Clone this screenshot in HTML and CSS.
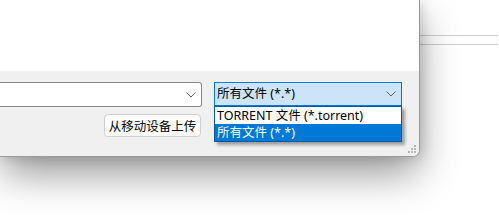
FILE: index.html
```html
<!DOCTYPE html>
<html lang="zh-CN">
<head>
<meta charset="utf-8">
<link rel="stylesheet" href="styles.css">
</head>
<body>
<div class="desktop">
  <div class="window">
    <div class="file-list"></div>
    <div class="footer">
      <div class="row row-top">
        <div class="name-box">
          <svg class="chev" width="10" height="6" viewBox="0 0 10 6"><path d="M0.5 0.5 L5 5 L9.5 0.5" fill="none" stroke="#606060" stroke-width="1"/></svg>
        </div>
        <div class="type-wrap">
          <div class="type-box">
            <span>所有文件 (*.*)</span>
            <svg class="chev" width="10" height="6" viewBox="0 0 10 6"><path d="M0.5 0.5 L5 5 L9.5 0.5" fill="none" stroke="#606060" stroke-width="1"/></svg>
          </div>
          <ul class="type-list">
            <li>TORRENT 文件 (*.torrent)</li>
            <li class="sel">所有文件 (*.*)</li>
          </ul>
        </div>
      </div>
      <div class="row row-bottom">
        <button class="btn">从移动设备上传</button>
      </div>
      <div class="grip">
        <svg width="9" height="9" viewBox="0 0 9 9" fill="#b8b8b8">
          <rect x="6" y="0" width="2" height="2"/>
          <rect x="3" y="3" width="2" height="2"/><rect x="6" y="3" width="2" height="2"/>
          <rect x="0" y="6" width="2" height="2"/><rect x="3" y="6" width="2" height="2"/><rect x="6" y="6" width="2" height="2"/>
        </svg>
      </div>
    </div>
  </div>
  <div class="behind">
    <div class="line l1"></div>
    <div class="line l2"></div>
  </div>
</div>
</body>
</html>
```
FILE: styles.css
```css
html, body {
  margin: 0;
  padding: 0;
  width: 499px;
  height: 215px;
  overflow: hidden;
  background: #ffffff;
  font-family: "Noto Sans", "Noto Sans CJK SC", sans-serif;
  font-size: 12.5px;
}
.desktop {
  display: flex;
  width: 499px;
  height: 215px;
  background: #ffffff;
}
.window {
  position: relative;
  z-index: 2;
  width: 419px;
  height: 156px;
  flex: none;
  border-right: 1px solid #9a9a9a;
  border-bottom: 1px solid #9a9a9a;
  border-bottom-right-radius: 7px;
  box-shadow: 0 18px 40px -2px rgba(0,0,0,0.42), 3px 2px 12px rgba(0,0,0,0.12);
  display: flex;
  flex-direction: column;
}
.file-list {
  height: 71px;
  background: #ffffff;
  flex: none;
}
.footer {
  flex: 1;
  background: #f0f0f0;
  border-bottom-right-radius: 7px;
  position: relative;
  padding-top: 11px;
  display: flex;
  flex-direction: column;
}
.row {
  display: flex;
}
.name-box {
  width: 198px;
  height: 23px;
  margin-left: -2px;
  border: 1px solid #8a8a8a;
  border-left: none;
  border-radius: 0 3px 3px 0;
  background: #ffffff;
  display: flex;
  align-items: center;
  justify-content: flex-end;
  padding-right: 5px;
  box-sizing: content-box;
}
.type-wrap {
  position: relative;
  margin-left: 12px;
}
.type-box {
  width: 179px;
  height: 22px;
  border: 1px solid #0078d7;
  background: #cce4f7;
  display: flex;
  align-items: center;
  justify-content: space-between;
  padding: 0 5px 0 2px;
  box-sizing: content-box;
  color: #000;
  line-height: 22px;
}
.type-box span { white-space: nowrap; }
.type-list {
  position: absolute;
  left: 0;
  top: 24px;
  width: 186px;
  margin: 0;
  padding: 0;
  list-style: none;
  border: 1px solid #0a5aa0;
  background: #fff;
  box-shadow: 3px 3px 3px rgba(0,0,0,0.35);
  z-index: 5;
}
.type-list li {
  height: 17px;
  line-height: 17px;
  padding-left: 2px;
  color: #000;
  white-space: nowrap;
}
.type-list li.sel {
  background: #0078d7;
  color: #fff;
}
.row-bottom {
  margin-top: 7px;
  padding-left: 104px;
}
.btn {
  width: 97px;
  height: 23px;
  padding: 0;
  border: 1px solid #d0d0d0;
  border-radius: 4px;
  background: #fdfdfd;
  font-family: "Noto Sans CJK SC", sans-serif;
  font-size: 12.5px;
  color: #000;
  line-height: 21px;
}
.grip {
  position: absolute;
  right: 2px;
  bottom: 2px;
  width: 9px;
  height: 9px;
  line-height: 0;
}
.behind {
  flex: 1;
  padding-top: 35px;
}
.line {
  height: 1px;
  background: #d0d0d0;
  margin-right: 1px;
}
.l2 { margin-top: 8px; }
```
